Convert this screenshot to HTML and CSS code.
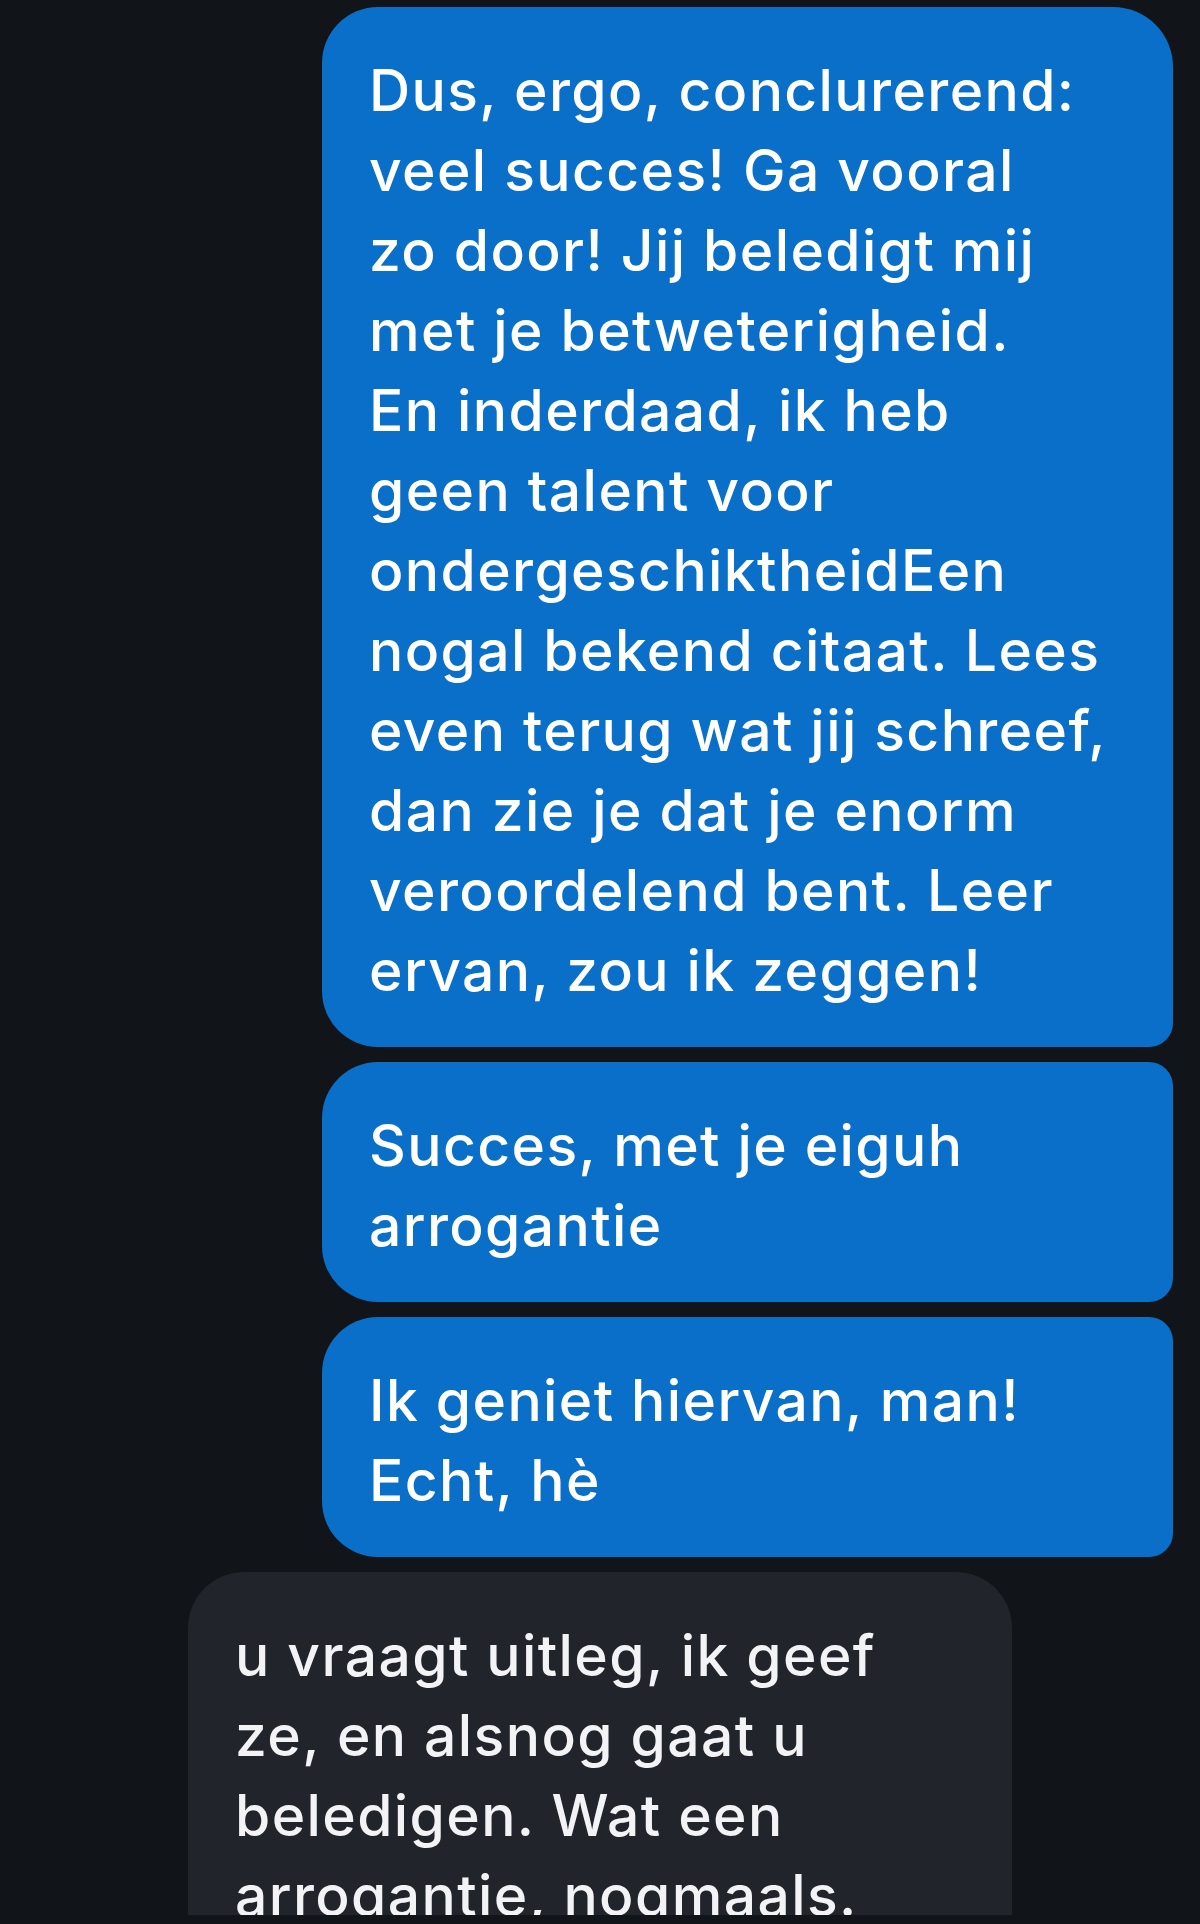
FILE: index.html
```html
<!DOCTYPE html>
<html lang="nl">
<head>
<meta charset="utf-8">
<title>Chat</title>
<link rel="stylesheet" href="styles.css">
</head>
<body>
<main class="thread">
  <div class="group outgoing">
    <div class="bubble out first">Dus, ergo, conclurerend:<br>veel succes! Ga vooral<br>zo door! Jij beledigt mij<br>met je betweterigheid.<br>En inderdaad, ik heb<br>geen talent voor<br>ondergeschiktheidEen<br>nogal bekend citaat. Lees<br>even terug wat jij schreef,<br>dan zie je dat je enorm<br>veroordelend bent. Leer<br>ervan, zou ik zeggen!</div>
    <div class="bubble out middle">Succes, met je eiguh<br>arrogantie</div>
    <div class="bubble out last">Ik geniet hiervan, man!<br>Echt, hè</div>
  </div>
  <div class="group incoming">
    <div class="bubble in first">u vraagt uitleg, ik geef<br>ze, en alsnog gaat u<br>beledigen. Wat een<br>arrogantie, nogmaals.</div>
  </div>
</main>
</body>
</html>
```

FILE: styles.css
```css
html, body {
  margin: 0;
  padding: 0;
  background: #111418;
}

.thread {
  height: 1915px;
  overflow: hidden;
  padding-top: 7px;
  box-sizing: border-box;
  display: flex;
  flex-direction: column;
  gap: 15px;
  font-family: Inter, Lato, sans-serif;
  font-variant-ligatures: none;
}

.group {
  display: flex;
  flex-direction: column;
  gap: 15px;
}

.outgoing {
  align-items: flex-end;
  padding-right: 27px;
}

.incoming {
  align-items: flex-start;
  padding-left: 188px;
}

.bubble {
  box-sizing: border-box;
  font-size: 57px;
  font-weight: 500;
  letter-spacing: 1.4px;
  line-height: 80px;
  white-space: nowrap;
  padding: 44px 0 36px 47px;
}

.out {
  width: 851px;
  background: #0a6fc8;
  color: #ffffff;
  border-radius: 56px 24px 24px 56px;
}

.out.first {
  border-top-right-radius: 60px;
}

.in {
  width: 824px;
  background: #22242c;
  color: #f3f3f5;
  border-radius: 56px 56px 56px 24px;
}
```
